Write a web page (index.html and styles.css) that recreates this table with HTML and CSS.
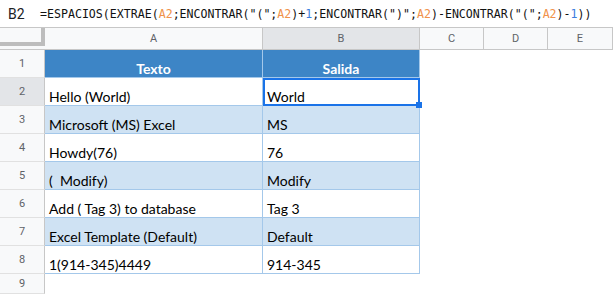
FILE: index.html
```html
<!DOCTYPE html>
<html lang="es">
<head>
    <meta charset="UTF-8">
    <title>Hoja de cálculo</title>
    <link rel="stylesheet" href="styles.css">
</head>
<body>
    <div class="formula-bar">
        <span class="name-box">B2</span>
        <span class="formula">=ESPACIOS(EXTRAE(<span class="ref">A2</span>;ENCONTRAR("(";<span class="ref">A2</span>)+<span class="num">1</span>;ENCONTRAR(")";<span class="ref">A2</span>)-ENCONTRAR("(";<span class="ref">A2</span>)-<span class="num">1</span>))</span>
    </div>

    <div class="sheet">
        <!-- column headers -->
        <div class="corner"><div class="freeze"></div></div>
        <div class="col-head">A</div>
        <div class="col-head active">B</div>
        <div class="col-head">C</div>
        <div class="col-head">D</div>
        <div class="col-head">E</div>

        <div class="row-head">1</div>
        <div class="cell head">Texto</div>
        <div class="cell head">Salida</div>
        <div class="blank"></div><div class="blank"></div><div class="blank"></div>

        <div class="row-head active">2</div>
        <div class="cell">Hello (World)</div>
        <div class="cell selected">World<span class="sel-box"></span><span class="sel-handle"></span></div>
        <div class="blank"></div><div class="blank"></div><div class="blank"></div>

        <div class="row-head">3</div>
        <div class="cell band">Microsoft (MS) Excel</div>
        <div class="cell band">MS</div>
        <div class="blank"></div><div class="blank"></div><div class="blank"></div>

        <div class="row-head">4</div>
        <div class="cell">Howdy(76)</div>
        <div class="cell">76</div>
        <div class="blank"></div><div class="blank"></div><div class="blank"></div>

        <div class="row-head">5</div>
        <div class="cell band">(  Modify)</div>
        <div class="cell band">Modify</div>
        <div class="blank"></div><div class="blank"></div><div class="blank"></div>

        <div class="row-head">6</div>
        <div class="cell">Add ( Tag 3) to database</div>
        <div class="cell">Tag 3</div>
        <div class="blank"></div><div class="blank"></div><div class="blank"></div>

        <div class="row-head">7</div>
        <div class="cell band">Excel Template (Default)</div>
        <div class="cell band">Default</div>
        <div class="blank"></div><div class="blank"></div><div class="blank"></div>

        <div class="row-head">8</div>
        <div class="cell">1(914-345)4449</div>
        <div class="cell">914-345</div>
        <div class="blank"></div><div class="blank"></div><div class="blank"></div>

        <div class="row-head">9</div>
        <div class="blank"></div><div class="blank"></div>
        <div class="blank"></div><div class="blank"></div><div class="blank"></div>
    </div>
</body>
</html>
```

FILE: styles.css
```css
body {
    margin: 0;
    width: 613px;
    height: 294px;
    overflow: hidden;
    background-color: #fff;
    font-family: Roboto, "Liberation Sans", sans-serif;
}

/* formula bar on top */
.formula-bar {
    height: 27px;
    border-bottom: 1px solid #c7c7c7;
    display: flex;
    align-items: center;
    white-space: nowrap;
}

.name-box {
    width: 40px;
    padding-left: 8px;
    box-sizing: border-box;
    font-size: 14px;
    color: #202124;
}

.formula {
    font-family: "DejaVu Sans Mono", monospace;
    font-size: 11.6px;
    color: #111;
}

.ref {
    color: #f0924a;
}

.num {
    color: #3b7ddd;
}

/* the grid itself */
.sheet {
    display: grid;
    grid-template-columns: 45px 218px 157px 64px 64px 65px;
    grid-template-rows: 22px repeat(8, 28px) 20px;
}

.corner {
    background-color: #f8f9fa;
    border-bottom: 1px solid #c7c7c7;
    box-sizing: border-box;
}

.freeze {
    height: 18px;
    border-right: 4px solid #bdbdbd;
    border-bottom: 4px solid #bdbdbd;
    box-sizing: border-box;
}

.col-head {
    background-color: #f8f9fa;
    border-right: 1px solid #c7c7c7;
    border-bottom: 1px solid #c7c7c7;
    box-sizing: border-box;
    display: flex;
    align-items: center;
    justify-content: center;
    font-size: 11px;
    color: #5f6368;
}

.row-head {
    background-color: #f8f9fa;
    border-right: 1px solid #c7c7c7;
    border-bottom: 1px solid #e1e1e1;
    box-sizing: border-box;
    display: flex;
    align-items: center;
    justify-content: center;
    font-size: 11px;
    color: #5f6368;
}

.active {
    background-color: #e3e5e8;
}

.cell {
    display: flex;
    align-items: flex-end;
    padding: 0 4px;
    border-right: 1px solid #a4c8ea;
    border-bottom: 1px solid #a4c8ea;
    box-sizing: border-box;
    font-family: Lato, "Liberation Sans", sans-serif;
    font-size: 14px;
    color: #000;
    white-space: pre;
}

.head {
    background-color: #3d85c6;
    color: #fff;
    font-weight: bold;
    justify-content: center;
}

.band {
    background-color: #cfe2f3;
}

.selected {
    position: relative;
}

.sel-box {
    position: absolute;
    top: 0;
    left: 0;
    right: -1px;
    bottom: -1px;
    border: 2px solid #1a73e8;
}

.sel-handle {
    position: absolute;
    right: -3px;
    bottom: -3px;
    width: 6px;
    height: 6px;
    background-color: #1a73e8;
}
```
